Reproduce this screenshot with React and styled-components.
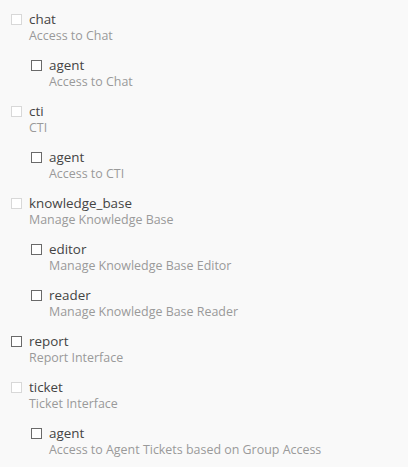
import React from "react"
import styled, { createGlobalStyle } from "styled-components"

const GlobalStyle = createGlobalStyle`
  body {
    margin: 0;
    background: #f9f9f9;
    font-family: "Open Sans", "Noto Sans", sans-serif;
  }
`

const permissions = [
  { name: "chat", note: "Access to Chat", muted: true, children: [{ name: "agent", note: "Access to Chat" }] },
  { name: "cti", note: "CTI", muted: true, children: [{ name: "agent", note: "Access to CTI" }] },
  {
    name: "knowledge_base",
    note: "Manage Knowledge Base",
    muted: true,
    children: [
      { name: "editor", note: "Manage Knowledge Base Editor" },
      { name: "reader", note: "Manage Knowledge Base Reader" },
    ],
  },
  { name: "report", note: "Report Interface" },
  {
    name: "ticket",
    note: "Ticket Interface",
    muted: true,
    children: [{ name: "agent", note: "Access to Agent Tickets based on Group Access" }],
  },
]

export default function App() {
  return (
    <>
      <GlobalStyle />
      <List>
        {permissions.map((p) => (
          <Group key={p.name}>
            <Item>
              <Box $muted={p.muted} />
              <Text>
                <Title>{p.name}</Title>
                <Note>{p.note}</Note>
              </Text>
            </Item>
            {p.children && (
              <Children>
                {p.children.map((c) => (
                  <Item key={c.name}>
                    <Box />
                    <Text>
                      <Title>{c.name}</Title>
                      <Note>{c.note}</Note>
                    </Text>
                  </Item>
                ))}
              </Children>
            )}
          </Group>
        ))}
      </List>
    </>
  )
}

const List = styled.div`
  padding: 10px 0 0 11px;
`
const Group = styled.div``
const Children = styled.div`
  padding-left: 20px;
`
const Item = styled.div`
  display: flex;
  align-items: flex-start;
  gap: 7px;
  margin-bottom: 12px;
`
const Box = styled.span`
  flex: none;
  box-sizing: border-box;
  width: 11px;
  height: 11px;
  margin-top: 4px;
  border: 1px solid ${(p) => (p.$muted ? "#d8d8d8" : "#6a6a6a")};
  background: #fff;
`
const Text = styled.div`
  display: flex;
  flex-direction: column;
`
const Title = styled.div`
  font-size: 13.4px;
  line-height: 18px;
  color: #444;
`
const Note = styled.div`
  font-size: 12.45px;
  line-height: 16px;
  color: #9a9a9a;
`
